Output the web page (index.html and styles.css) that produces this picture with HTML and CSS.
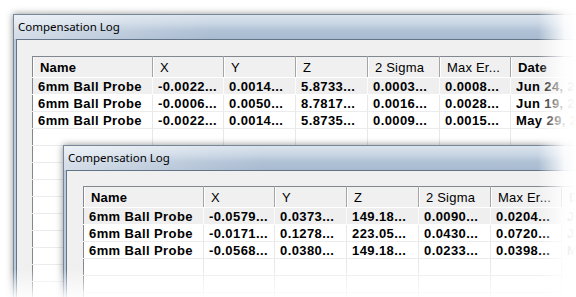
FILE: index.html
```html
<!DOCTYPE html>
<html lang="en">
<head>
    <meta charset="UTF-8">
    <title>Compensation Log</title>
    <link rel="stylesheet" href="styles.css">
</head>
<body>
    <div class="desk">
        <!-- older log window, partly covered -->
        <div class="win win-back">
            <div class="title">Compensation Log</div>
            <div class="client">
                <table class="list">
                    <colgroup><col><col><col><col><col><col><col></colgroup>
                    <tr>
                        <th class="strong">Name</th><th>X</th><th>Y</th><th>Z</th><th>2 Sigma</th><th>Max Er...</th><th class="strong">Date</th>
                    </tr>
                    <tr class="hot">
                        <td>6mm Ball Probe</td><td>-0.0022...</td><td>0.0014...</td><td>5.8733...</td><td>0.0003...</td><td>0.0008...</td><td>Jun 24, 2013</td>
                    </tr>
                    <tr>
                        <td>6mm Ball Probe</td><td>-0.0006...</td><td>0.0050...</td><td>8.7817...</td><td>0.0016...</td><td>0.0028...</td><td>Jun 19, 2013</td>
                    </tr>
                    <tr>
                        <td>6mm Ball Probe</td><td>-0.0022...</td><td>0.0014...</td><td>5.8735...</td><td>0.0009...</td><td>0.0015...</td><td>May 29, 2013</td>
                    </tr>
                    <tr class="empty"><td></td><td></td><td></td><td></td><td></td><td></td><td></td></tr>
                    <tr class="empty"><td></td><td></td><td></td><td></td><td></td><td></td><td></td></tr>
                    <tr class="empty"><td></td><td></td><td></td><td></td><td></td><td></td><td></td></tr>
                    <tr class="empty"><td></td><td></td><td></td><td></td><td></td><td></td><td></td></tr>
                    <tr class="empty"><td></td><td></td><td></td><td></td><td></td><td></td><td></td></tr>
                    <tr class="empty"><td></td><td></td><td></td><td></td><td></td><td></td><td></td></tr>
                    <tr class="empty"><td></td><td></td><td></td><td></td><td></td><td></td><td></td></tr>
                    <tr class="empty"><td></td><td></td><td></td><td></td><td></td><td></td><td></td></tr>
                    <tr class="empty"><td></td><td></td><td></td><td></td><td></td><td></td><td></td></tr>
                    <tr class="empty"><td></td><td></td><td></td><td></td><td></td><td></td><td></td></tr>
                </table>
            </div>
        </div>

        <!-- newer log window on top -->
        <div class="win win-front">
            <div class="title">Compensation Log</div>
            <div class="client">
                <table class="list">
                    <colgroup><col><col><col><col><col><col><col></colgroup>
                    <tr>
                        <th class="strong">Name</th><th>X</th><th>Y</th><th>Z</th><th>2 Sigma</th><th>Max Er...</th><th class="strong">Date</th>
                    </tr>
                    <tr class="hot">
                        <td>6mm Ball Probe</td><td>-0.0579...</td><td>0.0373...</td><td>149.18...</td><td>0.0090...</td><td>0.0204...</td><td>Jul 02, 2013</td>
                    </tr>
                    <tr>
                        <td>6mm Ball Probe</td><td>-0.0171...</td><td>0.1278...</td><td>223.05...</td><td>0.0430...</td><td>0.0720...</td><td>Jun 28, 2013</td>
                    </tr>
                    <tr>
                        <td>6mm Ball Probe</td><td>-0.0568...</td><td>0.0380...</td><td>149.18...</td><td>0.0233...</td><td>0.0398...</td><td>May 30, 2013</td>
                    </tr>
                    <tr class="empty"><td></td><td></td><td></td><td></td><td></td><td></td><td></td></tr>
                    <tr class="empty"><td></td><td></td><td></td><td></td><td></td><td></td><td></td></tr>
                    <tr class="empty"><td></td><td></td><td></td><td></td><td></td><td></td><td></td></tr>
                </table>
            </div>
        </div>

        <div class="fade-right"></div>
        <div class="fade-bottom"></div>
    </div>
</body>
</html>
```

FILE: styles.css
```css
body {
    margin: 0;
    background: #fff;
}

.desk {
    position: relative;
    width: 576px;
    height: 297px;
    overflow: hidden;
    background: #fff;
}

/* window frame */
.win {
    position: absolute;
    display: flex;
    flex-direction: column;
    border: 1px solid #76879a;
    padding: 0 2px 2px 2px;
    background: #bccbdc;
    box-shadow: 0 0 7px rgba(0, 0, 0, 0.45);
}

.win-back {
    left: 13px;
    top: 14px;
    width: 640px;
    height: 330px;
}

.win-front {
    left: 63px;
    top: 145px;
    width: 600px;
    height: 200px;
}

.title {
    height: 24px;
    line-height: 23px;
    margin: 0 -2px;
    padding-left: 4px;
    font-family: "Noto Sans", "Liberation Sans", sans-serif;
    font-size: 11.5px;
    color: #000;
    background:
        linear-gradient(90deg, rgba(255, 255, 255, 0.5) 0, rgba(255, 255, 255, 0.15) 130px, rgba(255, 255, 255, 0) 200px),
        linear-gradient(180deg, #dae3ed 0%, #c9d6e4 35%, #b1c2d6 65%, #a8bad0 100%);
}

.client {
    flex: 1;
    background: #f0f0f0;
    border-top: 1px solid #637487;
    border-left: 1px solid #637487;
    padding: 16px 0 0 15px;
}

.win-front .client {
    padding: 15px 0 0 16px;
}

/* list view */
.list {
    border-collapse: collapse;
    table-layout: fixed;
    width: 700px;
    background: #fff;
    border-top: 1px solid #828790;
    border-left: 1px solid #828790;
    font-family: "Liberation Sans", Arial, sans-serif;
    font-size: 13px;
    letter-spacing: 0.4px;
    color: #000;
}

.list col:nth-child(1) { width: 120px; }
.list col:nth-child(2) { width: 71px; }
.list col:nth-child(3) { width: 72px; }
.list col:nth-child(4) { width: 72px; }
.list col:nth-child(5) { width: 72px; }
.list col:nth-child(6) { width: 71px; }
.list col:nth-child(7) { width: 222px; }

.list th {
    height: 20px;
    padding: 0 0 0 7px;
    text-align: left;
    font-weight: normal;
    letter-spacing: 0.2px;
    white-space: nowrap;
    overflow: hidden;
    background: #f0f0f0;
    border-right: 1px solid #a5a5a5;
    border-bottom: 1px solid #fff;
    box-shadow: inset 1px 0 #fff;
}

.list th.strong {
    font-weight: bold;
}

.list td {
    height: 16px;
    padding: 0 0 0 5px;
    font-weight: bold;
    white-space: nowrap;
    overflow: hidden;
    border-right: 1px solid #e8e8e8;
    border-bottom: 1px solid #ececec;
}

.list tr.hot td {
    background: #efefef;
    border-right-color: #fbfbfb;
    border-bottom-color: #fff;
}

/* soft edges of the picture */
.fade-right {
    position: absolute;
    top: 0;
    right: 0;
    width: 38px;
    height: 100%;
    background: linear-gradient(90deg, rgba(255, 255, 255, 0) 0, rgba(255, 255, 255, 0.9) 70%, #fff 100%);
}

.fade-bottom {
    position: absolute;
    left: 0;
    bottom: 0;
    width: 100%;
    height: 28px;
    background: linear-gradient(180deg, rgba(255, 255, 255, 0) 0, rgba(255, 255, 255, 0.88) 100%);
}
```
